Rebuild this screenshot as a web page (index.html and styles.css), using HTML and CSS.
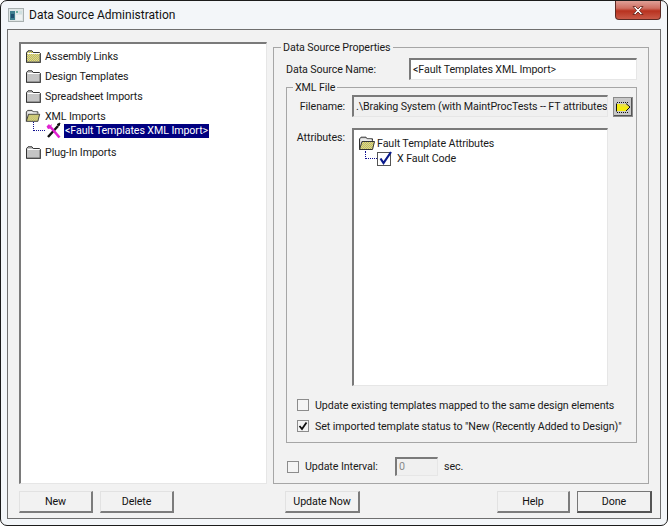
FILE: index.html
```html
<!DOCTYPE html>
<html lang="en">
<head>
<meta charset="utf-8">
<title>Data Source Administration</title>
<link rel="stylesheet" href="styles.css">
</head>
<body>
<svg class="defs" width="0" height="0" aria-hidden="true">
  <defs>
    <pattern id="dither" width="2" height="2" patternUnits="userSpaceOnUse">
      <rect width="2" height="2" fill="#f2ea60"/>
      <rect width="1" height="1" fill="#a8a890"/>
      <rect x="1" y="1" width="1" height="1" fill="#a8a890"/>
    </pattern>
    <symbol id="folder-grey" viewBox="0 0 16 13">
      <path d="M1.5 12.5V2.5L3 .8h4l1.2 1.7h6.3l1 1v9z" fill="#c4c4c4" stroke="#333"/>
      <path d="M2.5 3.5h12" stroke="#fff"/>
      <path d="M15 4v8M2 12h13" stroke="#666"/>
    </symbol>
    <symbol id="folder-yellow" viewBox="0 0 16 13">
      <path d="M1.5 12.5V2.5L3 .8h4l1.2 1.7h6.3l1 1v9z" fill="url(#dither)" stroke="#333"/>
      <path d="M2.5 3.5h12" stroke="#fff"/>
      <path d="M15 4v8M2 12h13" stroke="#666"/>
    </symbol>
    <symbol id="folder-open" viewBox="0 0 18 15">
      <path d="M1.5 13.5V3L3 1.2h5l1.2 1.6h5.3v2" fill="#d8d8d8" stroke="#333"/>
      <path d="M1.5 13.5L4 5.5h12.5l-2 8z" fill="url(#dither)" stroke="#333"/>
      <path d="M3 4h10" stroke="#fff"/>
    </symbol>
  </defs>
</svg>
<div class="window">
  <header class="titlebar">
    <svg class="app-icon" width="16" height="14" viewBox="0 0 16 14">
      <rect x=".5" y=".5" width="15" height="13" fill="#dfe6e6" stroke="#a8b0b0"/>
      <rect x="2" y="3" width="5" height="9" fill="#3f7f8f"/>
      <rect x="3" y="6" width="3" height="4" fill="#1f4f6f"/>
      <rect x="8" y="3" width="2" height="2" fill="#6fb0a0"/>
      <rect x="11" y="3" width="3" height="3" fill="#cfe0e0"/>
      <rect x="8" y="7" width="6" height="5" fill="#eef2f2"/>
    </svg>
    <span class="title">Data Source Administration</span>
    <div class="close">
      <svg width="14" height="11" viewBox="0 0 14 11">
        <path d="M2 1.5h2.5L7 4l2.500-2.500H12L8.500 5.500 12 9.500H9.500L7 7 4.500 9.500H2l3.500-4z" fill="#fff" stroke="#5a1a12" stroke-width=".8"/>
      </svg>
    </div>
  </header>
  <main class="panel">
    <div class="content">
      <div class="tree sunken">
        <div class="tree-row"><svg class="folder"><use href="#folder-yellow"/></svg><span>Assembly Links</span></div>
        <div class="tree-row"><svg class="folder"><use href="#folder-grey"/></svg><span>Design Templates</span></div>
        <div class="tree-row"><svg class="folder"><use href="#folder-grey"/></svg><span>Spreadsheet Imports</span></div>
        <div class="tree-row"><svg class="folder"><use href="#folder-open"/></svg><span>XML Imports</span></div>
        <div class="tree-child">
          <span class="connector"></span>
          <svg class="tool-icon" width="17" height="17" viewBox="0 0 17 17">
            <path d="M3 15L13 4" stroke="#111" stroke-width="2.400"/>
            <path d="M12 2.500l3-1.500-1 3z" fill="#111" stroke="#111"/>
            <path d="M14.500 15.500L5.500 5" stroke="#e020d0" stroke-width="2.600"/>
            <path d="M1.500 4.500L4 2l1 1.500L7 2 5.500 6.500 3 7z" fill="#e020d0"/>
          </svg>
          <span class="selected">&lt;Fault Templates XML Import&gt;</span>
        </div>
        <div class="tree-row plugin"><svg class="folder"><use href="#folder-grey"/></svg><span>Plug-In Imports</span></div>
      </div>
      <fieldset class="props">
        <legend>Data Source Properties</legend>
        <div class="name-row">
          <label class="name-label">Data Source Name:</label>
          <div class="field name-field sunken">&lt;Fault Templates XML Import&gt;</div>
        </div>
        <fieldset class="xml">
          <legend>XML File</legend>
          <div class="file-row">
            <label class="side-label">Filename:</label>
            <div class="field file-field sunken">.\Braking System (with MaintProcTests -- FT attributes</div>
            <div class="browse">
              <svg width="16" height="14" viewBox="0 0 16 14">
                <path d="M2 2.500h12" stroke="#111" stroke-dasharray="1 1"/>
                <path d="M1 3.500h1v8H1z" fill="#111"/>
                <path d="M2 4h9l3 2.500v1L11 11H2z" fill="#f5ec10"/>
                <path d="M5 4h6l3 2.500H5z" fill="#e8e050"/>
                <path d="M11 3.500l4 3.500-4 4" fill="none" stroke="#111"/>
                <path d="M2 12.500h12" stroke="#111" stroke-dasharray="1 1"/>
              </svg>
            </div>
          </div>
          <div class="attr-row">
            <label class="side-label attr-label">Attributes:</label>
            <div class="attr-list sunken">
              <div class="attr-root">
                <svg class="folder-lg"><use href="#folder-open"/></svg>
                <span>Fault Template Attributes</span>
              </div>
              <div class="attr-child">
                <span class="attr-connector"></span>
                <svg class="tick-box" width="16" height="15" viewBox="0 0 16 15">
                  <rect x=".5" y="1.500" width="13" height="13" fill="#fff" stroke="#555"/>
                  <path d="M3.500 7.500l3 4.500L14 1" fill="none" stroke="#0a1a8c" stroke-width="2.200"/>
                </svg>
                <span>X Fault Code</span>
              </div>
            </div>
          </div>
          <div class="check-row first-check"><span class="check"></span><span>Update existing templates mapped to the same design elements</span></div>
          <div class="check-row second-check">
            <span class="check">
              <svg width="10" height="10" viewBox="0 0 10 10"><path d="M1.500 5l2.500 3 4.500-6.500" fill="none" stroke="#111" stroke-width="1.800"/></svg>
            </span>
            <span>Set imported template status to "New (Recently Added to Design)"</span>
          </div>
        </fieldset>
        <div class="interval-row">
          <span class="check"></span>
          <span class="interval-label">Update Interval:</span>
          <div class="field interval-field sunken">0</div>
          <span>sec.</span>
        </div>
      </fieldset>
    </div>
    <div class="actions">
      <button class="btn" type="button">New</button>
      <button class="btn" type="button">Delete</button>
      <button class="btn update" type="button">Update Now</button>
      <button class="btn help" type="button">Help</button>
      <button class="btn default" type="button">Done</button>
    </div>
  </main>
</div>
</body>
</html>
```
FILE: styles.css
```css
* { box-sizing: border-box; }
html, body { margin: 0; padding: 0; background: #fff; }
body {
  font-family: Roboto, "Liberation Sans", Arial, sans-serif;
  font-size: 10.700px;
  letter-spacing: -.1px;
  color: #1a1a1a;
  width: 669px;
  height: 527px;
  overflow: hidden;
}
.defs { position: absolute; }
.window {
  width: 668px;
  height: 526px;
  border: 1px solid #1c1c1c;
  border-radius: 7px;
  background: #f3f6f9;
  padding: 0 6px 6px;
  display: flex;
  flex-direction: column;
}
.titlebar {
  height: 28px;
  display: flex;
  align-items: center;
  flex: none;
}
.app-icon { margin-left: 1px; }
.title { margin-left: 5px; font-size: 12px; letter-spacing: 0; color: #111; }
.close {
  margin-left: auto;
  margin-top: -9px;
  width: 46px;
  height: 19px;
  background: linear-gradient(#e0a097 0, #cf6f62 40%, #b8321f 55%, #c95a48 100%);
  border: 1px solid #5c2a24;
  border-top: 0;
  border-radius: 0 0 4px 4px;
  display: flex;
  align-items: center;
  justify-content: center;
}
.panel {
  flex: 1;
  width: 654px;
  background: #f2f2f2;
  border: 1px solid #6f6f6f;
  padding: 10px 0 0 11px;
  display: flex;
  flex-direction: column;
}
.content {
  display: flex;
  gap: 6px;
  height: 444px;
  flex: none;
}
.sunken {
  background: #fff;
  border-style: solid;
  border-width: 2px 1px 1px 2px;
  border-color: #7a7a7a #e6e6e6 #e6e6e6 #7a7a7a;
}
.tree {
  width: 248px;
  margin-top: 2px;
  padding: 2px 0 0 4px;
}
.tree-row {
  display: flex;
  align-items: center;
  height: 20px;
  gap: 4px;
}
.folder { width: 16px; height: 13px; flex: none; }
.tree-row:nth-child(4) .folder { width: 16px; height: 14px; }
.tree-child {
  height: 17px;
  margin-top: -4px;
  display: flex;
  align-items: center;
  position: relative;
}
.connector {
  width: 12px;
  height: 9px;
  margin: -9px 0 0 8px;
  border-left: 1px dotted #101090;
  border-bottom: 1px dotted #101090;
  flex: none;
}
.tool-icon { flex: none; margin-right: 2px; }
.selected {
  background: #000080;
  color: #fff;
  height: 14px;
  line-height: 14px;
  padding: 0 1px;
  white-space: nowrap;
}
.plugin { margin-top: 3px; }
.props {
  width: 376px;
  margin: 0;
  padding: 4px 11px 0 12px;
  border: 1px solid #a6a6a6;
  min-width: 0;
}
legend {
  padding: 0 2px;
  margin-left: -5px;
  line-height: 16px;
  height: 14px;
}
.name-row { display: flex; align-items: center; height: 22px; }
.name-label { width: 123px; flex: none; }
.field {
  height: 22px;
  line-height: 19px;
  padding: 0 0 0 2px;
  white-space: nowrap;
  overflow: hidden;
}
.name-field { width: 228px; }
.xml {
  margin: 0;
  padding: 1px 0 0 0;
  height: 363px;
  width: 351px;
  border: 1px solid #a6a6a6;
  min-width: 0;
}
.xml legend { margin-left: 6px; }
.file-row { display: flex; align-items: center; height: 22px; }
.side-label { width: 58px; padding-left: 1px; text-align: right; flex: none; margin-right: 7px; white-space: nowrap; }
.file-field { width: 256px; background: #f0f0f0; }
.browse {
  width: 20px;
  height: 20px;
  margin: 2px 0 0 5px;
  background: #c8c8c8;
  border-style: solid;
  border-width: 1px 2px 2px 1px;
  border-color: #eee #555 #555 #eee;
  outline: 1px solid #8a8a8a;
  outline-offset: -1px;
  display: flex;
  align-items: center;
  justify-content: center;
}
.attr-row { display: flex; margin-top: 11px; height: 258px; }
.attr-label { padding-top: 3px; }
.attr-list { width: 256px; height: 258px; padding: 6px 0 0 4px; }
.attr-root { display: flex; align-items: center; height: 15px; gap: 1px; }
.folder-lg { width: 18px; height: 15px; flex: none; }
.attr-child { display: flex; align-items: center; height: 15px; margin-top: 0; }
.attr-connector {
  width: 12px;
  height: 8px;
  margin: -7px 0 0 7px;
  border-left: 1px dotted #101090;
  border-bottom: 1px dotted #101090;
  flex: none;
}
.tick-box { flex: none; margin-right: 4px; }
.check-row { display: flex; align-items: center; gap: 6px; height: 14px; padding-left: 10px; white-space: nowrap; }
.first-check { margin-top: 12px; }
.second-check { margin-top: 7px; }
.check {
  width: 12px;
  height: 12px;
  flex: none;
  background: #f4f4f4;
  border: 1px solid #8c8c8c;
  display: flex;
  align-items: center;
  justify-content: center;
}
.interval-row { display: flex; align-items: center; height: 19px; margin-top: 14px; padding-left: 1px; }
.interval-label { margin-left: 6px; width: 90px; flex: none; }
.interval-field {
  width: 43px;
  height: 19px;
  line-height: 16px;
  background: #f0f0f0;
  color: #8a8a8a;
  margin-right: 6px;
  padding-left: 2px;
}
.actions { display: flex; margin-top: 7px; height: 22px; flex: none; }
.btn {
  width: 74px;
  height: 22px;
  font: inherit;
  letter-spacing: inherit;
  color: #111;
  padding: 0;
  background: #f2f2f2;
  border-style: solid;
  border-width: 1px 2px 2px 1px;
  border-color: #e2e2e2 #7c7c7c #7c7c7c #e2e2e2;
  margin-right: 7px;
}
.update { width: 75px; margin-left: 104px; }
.help { width: 73px; margin-left: 130px; }
.default {
  width: 75px;
  margin-right: 0;
  border-color: #777 #555 #555 #777;
}
```
